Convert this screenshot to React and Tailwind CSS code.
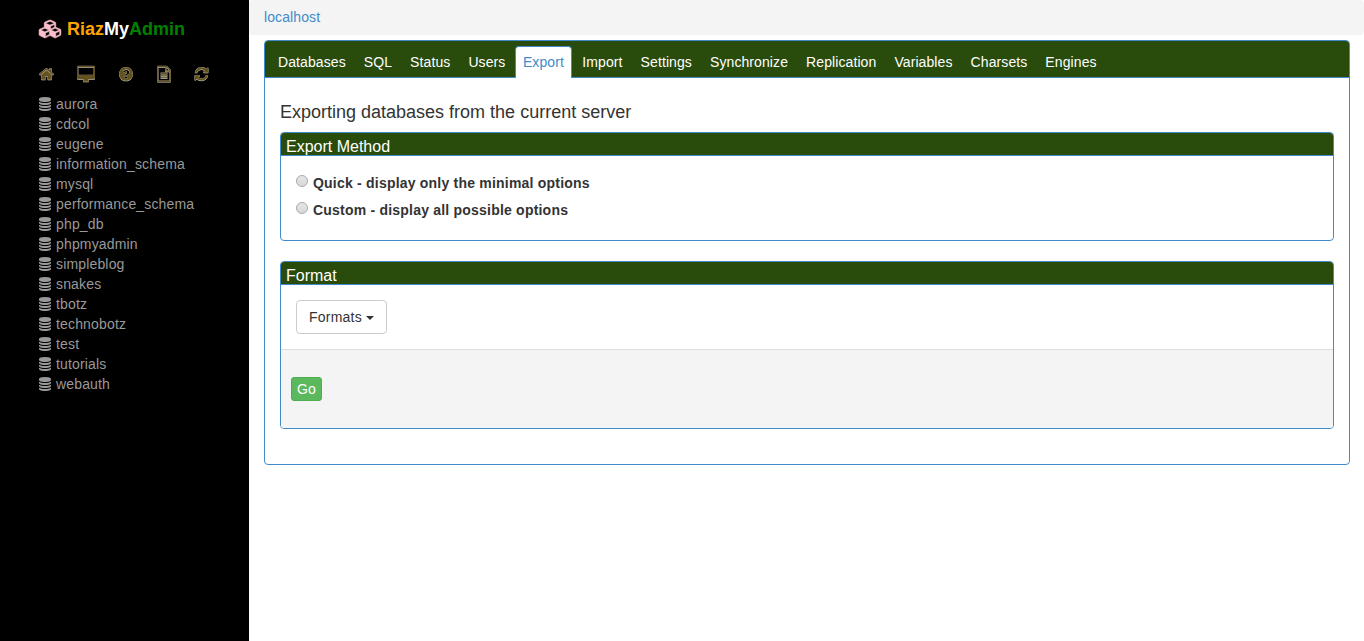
const ICONS = {
  database: {
    box: '128 0 1536 1792',
    d: 'M896 768q237 0 443-43t325-127v170q0 69-103 128t-280 93.5-385 34.5-385-34.5-280-93.5-103-128v-170q119 84 325 127t443 43zm0 768q237 0 443-43t325-127v170q0 69-103 128t-280 93.5-385 34.5-385-34.5-280-93.5-103-128v-170q119 84 325 127t443 43zm0-384q237 0 443-43t325-127v170q0 69-103 128t-280 93.5-385 34.5-385-34.5-280-93.5-103-128v-170q119 84 325 127t443 43zm0-1152q208 0 385 34.5t280 93.5 103 128v128q0 69-103 128t-280 93.5-385 34.5-385-34.5-280-93.5-103-128v-128q0-69 103-128t280-93.5 385-34.5z',
  },
  home: {
    box: '64 0 1664 1792',
    d: 'M1472 992v480q0 26-19 45t-45 19h-384v-384h-256v384h-384q-26 0-45-19t-19-45v-480q0-1 .5-3t.5-3l575-474 575 474q1 2 1 6zm223-69l-62 74q-8 9-21 11h-3q-13 0-21-7l-692-577-692 577q-12 8-24 7-13-2-21-11l-62-74q-8-10-7-23.5t11-21.5l719-599q32-26 76-26t76 26l244 204v-195q0-14 9-23t23-9h192q14 0 23 9t9 23v408l219 182q10 8 11 21.5t-7 23.5z',
  },
  desktop: {
    box: '-64 0 1920 1792',
    d: 'M1728 912v-752q0-13-9.5-22.5t-22.5-9.5h-1600q-13 0-22.5 9.5t-9.5 22.5v752q0 13 9.5 22.5t22.5 9.5h1600q13 0 22.5-9.5t9.5-22.5zm128-752v1088q0 66-47 113t-113 47h-544q0 37 16 77.5t32 71 16 43.5q0 26-19 45t-45 19h-512q-26 0-45-19t-19-45q0-14 16-44t32-70 16-78h-544q-66 0-113-47t-47-113v-1088q0-66 47-113t113-47h1600q66 0 113 47t47 113z',
  },
  help: {
    box: '128 0 1536 1792',
    d: 'M1024 1376v-192q0-14-9-23t-23-9h-192q-14 0-23 9t-9 23v192q0 14 9 23t23 9h192q14 0 23-9t9-23zm256-672q0-88-55.5-163t-138.5-116-170-41q-243 0-371 213-15 24 8 42l132 100q7 6 19 6 16 0 25-12 53-68 86-92 34-24 86-24 48 0 85.5 26t37.5 59q0 38-20 61t-68 45q-63 28-115.5 86.5t-52.5 125.5v36q0 14 9 23t23 9h192q14 0 23-9t9-23q0-19 21.5-49.5t54.5-49.5q32-18 49-28.5t46-35 44.5-48 28-60.5 12.5-81zm384 192q0 209-103 385.5t-279.5 279.5-385.5 103-385.5-103-279.5-279.5-103-385.5 103-385.5 279.5-279.5 385.5-103 385.5 103 279.5 279.5 103 385.5z',
  },
  file: {
    box: '128 0 1536 1792',
    d: 'M1596 380q28 28 48 76t20 88v1152q0 40-28 68t-68 28h-1344q-40 0-68-28t-28-68v-1600q0-40 28-68t68-28h896q40 0 88 20t76 48zm-444-244v376h376q-10-29-22-41l-313-313q-12-12-41-22zm384 1528v-1024h-416q-40 0-68-28t-28-68v-416h-768v1536h1280zm-1024-864q0-14 9-23t23-9h704q14 0 23 9t9 23v64q0 14-9 23t-23 9h-704q-14 0-23-9t-9-23v-64zm736 224q14 0 23 9t9 23v64q0 14-9 23t-23 9h-704q-14 0-23-9t-9-23v-64q0-14 9-23t23-9h704zm0 256q14 0 23 9t9 23v64q0 14-9 23t-23 9h-704q-14 0-23-9t-9-23v-64q0-14 9-23t23-9h704z',
  },
  refresh: {
    box: '128 0 1536 1792',
    d: 'M1639 1056q0 5-1 7-64 268-268 434.5t-478 166.5q-146 0-282.5-55t-243.5-157l-129 129q-19 19-45 19t-45-19-19-45v-448q0-26 19-45t45-19h448q26 0 45 19t19 45-19 45l-137 137q71 66 161 102t187 36q134 0 250-65t186-179q11-17 53-117 8-23 30-23h192q13 0 22.5 9.5t9.5 22.5zm25-800v448q0 26-19 45t-45 19h-448q-26 0-45-19t-19-45 19-45l138-138q-148-137-349-137-134 0-250 65t-186 179q-11 17-53 117-8 23-30 23h-199q-13 0-22.5-9.5t-9.5-22.5v-7q65-268 270-434.5t480-166.5q146 0 284 55.5t245 156.5l130-129q19-19 45-19t45 19 19 45z',
  },
  cubes: {
    box: '0 0 2176 1792',
    d: 'M640 1632l384-192v-314l-384 164v342zm-64-454l404-173-404-173-404 173zm1088 454l384-192v-314l-384 164v342zm-64-454l404-173-404-173-404 173zm-448-293l384-165v-266l-384 164v267zm-64-379l441-189-441-189-441 189zm1088 518v416q0 36-19 67t-52 47l-448 224q-25 14-57 14t-57-14l-448-224q-4-2-7-4-2 2-7 4l-448 224q-25 14-57 14t-57-14l-448-224q-33-16-52-47t-19-67v-416q0-38 21.5-70t56.5-48l434-186v-400q0-38 21.5-70t56.5-48l448-192q23-10 50-10t50 10l448 192q35 16 56.5 48t21.5 70v400l434 186q36 16 57 48t21 70z',
  },
};

function Icon({ name, className, embossed = false }) {
  return (
    <svg viewBox={ICONS[name].box} className={className} fill="currentColor" overflow="visible" aria-hidden="true">
      {embossed && (
        <>
          <path d={ICONS[name].d} transform="translate(0 -30)" className="fill-[#a8a499]" />
          <path d={ICONS[name].d} transform="translate(0 55)" className="fill-[#dedbd2]" />
        </>
      )}
      <path d={ICONS[name].d} />
    </svg>
  );
}

const databases = [
  'aurora', 'cdcol', 'eugene', 'information_schema', 'mysql', 'performance_schema', 'php_db',
  'phpmyadmin', 'simpleblog', 'snakes', 'tbotz', 'technobotz', 'test', 'tutorials', 'webauth',
];

const tabs = [
  'Databases', 'SQL', 'Status', 'Users', 'Export', 'Import', 'Settings',
  'Synchronize', 'Replication', 'Variables', 'Charsets', 'Engines',
];

const tools = [
  { name: 'home', size: 'h-4 w-[15px]' },
  { name: 'desktop', size: 'ml-[23px] h-[17px] w-[18px] mt-px' },
  { name: 'help', size: 'ml-6 h-4 w-[14px]' },
  { name: 'file', size: 'ml-6 h-4 w-[14px]' },
  { name: 'refresh', size: 'ml-[23px] h-4 w-[15px]' },
];

function Sidebar() {
  return (
    <aside className="w-[249px] shrink-0 bg-black pl-[39px] text-[#999]">
      <div className="flex h-[58px] items-center text-lg font-bold">
        <Icon name="cubes" className="mr-1.5 h-[18px] w-[22px] stroke-[#ffc0cb] stroke-[50] text-[#ffc0cb]" />
        <span className="text-[#ffa500]">Riaz</span>
        <span className="text-white">My</span>
        <span className="text-[#008000]">Admin</span>
      </div>
      <div className="flex h-9 items-center pb-[5px]">
        {tools.map((tool) => (
          <a key={tool.name} href="#" className={tool.size}>
            <Icon name={tool.name} embossed className="h-full w-full text-[#63521f]" />
          </a>
        ))}
      </div>
      <ul>
        {databases.map((name) => (
          <li key={name} className="flex h-5 items-center tracking-[0.16px]">
            <Icon name="database" className="mr-[5px] h-[14px] w-3" />
            {name}
          </li>
        ))}
      </ul>
    </aside>
  );
}

function Panel({ title, children }) {
  return (
    <section className="overflow-hidden rounded-[4px] border border-[#428bca]">
      <h3 className="h-[23px] border-b border-[#428bca] bg-[#294c0d] pl-[5px] pt-[5px] text-base leading-[18px] text-white">
        {title}
      </h3>
      {children}
    </section>
  );
}

function Option({ label }) {
  return (
    <label className="flex h-[27px] items-start gap-[5px] font-bold tracking-[0.21px]">
      <span className="mt-0.5 h-3 w-3 shrink-0 rounded-full border border-[#a9a9a9] bg-linear-to-b from-[#e6e6e6] to-[#d8d8d8]" />
      {label}
    </label>
  );
}

export default function App() {
  return (
    <div className="flex h-[641px] bg-white font-['Liberation_Sans',Arial,sans-serif] text-sm leading-5 text-[#333]">
      <Sidebar />
      <main className="min-w-0 flex-1">
        <div className="h-[35px] rounded-[4px] bg-[#f4f4f4] pl-[15px] pt-[7px] tracking-[0.1px] text-[#428bca]">
          localhost
        </div>
        <div className="ml-[15px] mr-[14px] mt-[5px] h-[425px] overflow-hidden rounded-[4px] border border-[#428bca]">
          <nav className="flex h-[37px] items-end border-b border-[#428bca] bg-[#294c0d] pl-[5px] tracking-[0.095px]">
            {tabs.map((tab) => (
              <a
                key={tab}
                href="#"
                className={
                  tab === 'Export'
                    ? '-ml-[0.5px] -mb-px mr-[2.4px] h-8 rounded-t-[4px] border border-b-0 border-[#428bca] bg-white px-[7px] pt-[5px] text-[#428bca]'
                    : '-mb-px mr-0.5 h-8 px-2 pt-1.5 text-white'
                }
              >
                {tab}
              </a>
            ))}
          </nav>
          <div className="px-[15px] pt-6">
            <h2 className="mb-[10px] text-lg leading-5">Exporting databases from the current server</h2>
            <Panel title="Export Method">
              <div className="h-[84px] pl-[15px] pt-[17px]">
                <Option label="Quick - display only the minimal options" />
                <Option label="Custom - display all possible options" />
              </div>
            </Panel>
            <div className="h-5" />
            <Panel title="Format">
              <div className="h-16 p-[15px]">
                <button className="flex h-[34px] w-[91px] items-center gap-1 rounded-[4px] border border-[#ccc] bg-white px-3 tracking-[0.22px]">
                  Formats
                  <span className="mt-px border-x-4 border-t-4 border-x-transparent border-t-[#333]" />
                </button>
              </div>
              <div className="h-[79px] border-t border-[#ddd] bg-[#f4f4f4] pl-[10px] pt-[27px]">
                <button className="flex h-6 items-center rounded-[3px] border border-[#4cae4c] bg-[#5cb85c] px-[5px] text-white">
                  Go
                </button>
              </div>
            </Panel>
          </div>
        </div>
      </main>
    </div>
  );
}
